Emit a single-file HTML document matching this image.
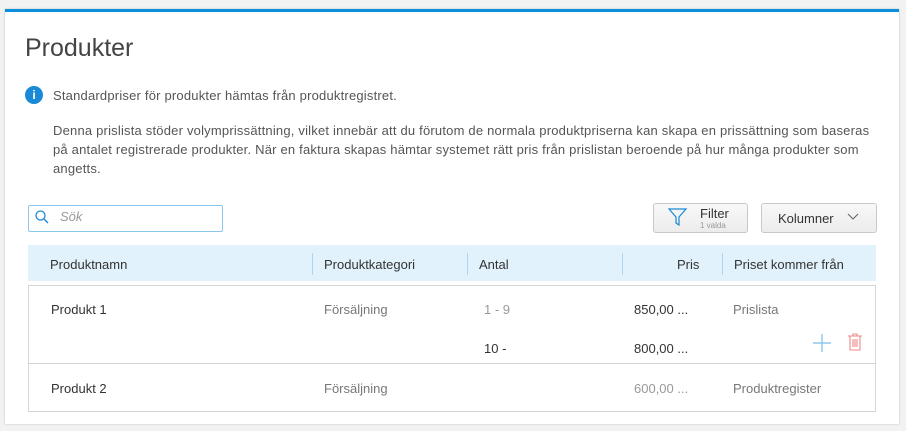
<!DOCTYPE html>
<html><head><style>
body{margin:0;width:906px;height:431px;background:#f2f2f2;font-family:"Liberation Sans",sans-serif;position:relative;overflow:hidden;color:#333}
.card{position:absolute;left:5px;top:9px;width:894px;height:412px;background:#fff;border-top:3px solid #0a8fdc;box-shadow:0 0 2px rgba(0,0,0,.2)}
.a{position:absolute;white-space:nowrap}
h1{position:absolute;left:25px;top:34px;margin:0;font-weight:normal;font-size:25px;color:#444}
.p{font-size:13px;color:#555;line-height:19px;letter-spacing:0.2px}
.btn{position:absolute;border:1px solid #c8c8c8;border-radius:3px;background:linear-gradient(#f8f8f8,#ececec);}
.hdr{position:absolute;left:28px;top:245px;width:848px;height:36px;background:#e1f2fc}
.sep{position:absolute;top:8px;width:1px;height:22px;background:#a9d8f2}
.t{font-size:13px;color:#333}
.g{color:#777}
.row{position:absolute;left:28px;width:846px;border:1px solid #d6d6d6;background:#fff}
</style></head><body>
<div class="card"></div>
<h1>Produkter</h1>
<div class="a" style="left:25px;top:86px;width:18px;height:18px;border-radius:50%;background:#1a8ad6;color:#fff;font-size:12px;font-weight:bold;text-align:center;line-height:18px">i</div>
<div class="a p" style="left:53px;top:86px">Standardpriser för produkter hämtas från produktregistret.</div>
<div class="a p" style="left:53px;top:121px">Denna prislista stöder volymprissättning, vilket innebär att du förutom de normala produktpriserna kan skapa en prissättning som baseras<br>på antalet registrerade produkter. När en faktura skapas hämtar systemet rätt pris från prislistan beroende på hur många produkter som<br>angetts.</div>
<div class="a" style="left:28px;top:205px;width:193px;height:25px;border:1px solid #8cc8ee;border-radius:2px"></div>
<svg class="a" style="left:34px;top:209px" width="16" height="16"><circle cx="6.5" cy="6.5" r="4.5" fill="none" stroke="#1a8ad6" stroke-width="1.3"/><line x1="10" y1="10" x2="14" y2="14" stroke="#1a8ad6" stroke-width="1.4"/></svg>
<div class="a" style="left:60px;top:209px;font-size:13px;font-style:italic;color:#999">Sök</div>
<div class="btn" style="left:653px;top:203px;width:93px;height:28px"></div>
<svg class="a" style="left:668px;top:208px" width="20" height="18"><path d="M1 1H18L11 9V17L8 15V9Z" fill="none" stroke="#1a8ad6" stroke-width="1.2"/></svg>
<div class="a" style="left:700px;top:206px;font-size:13px;color:#333">Filter</div>
<div class="a" style="left:700px;top:221px;font-size:8px;color:#999">1 valda</div>
<div class="btn" style="left:761px;top:203px;width:114px;height:28px"></div>
<div class="a" style="left:778px;top:211px;font-size:13px">Kolumner</div>
<svg class="a" style="left:847px;top:213px" width="12" height="8"><path d="M1 1L6 6L11 1" fill="none" stroke="#666" stroke-width="1.1"/></svg>
<div class="hdr">
<div class="sep" style="left:284px"></div><div class="sep" style="left:439px"></div><div class="sep" style="left:594px"></div><div class="sep" style="left:694px"></div>
<div class="a t" style="left:22px;top:12px">Produktnamn</div>
<div class="a t" style="left:296px;top:12px">Produktkategori</div>
<div class="a t" style="left:451px;top:12px">Antal</div>
<div class="a t" style="left:649px;top:12px">Pris</div>
<div class="a t" style="left:706px;top:12px">Priset kommer från</div>
</div>
<div class="row" style="top:285px;height:77px"></div>
<div class="row" style="top:363px;height:47px"></div>
<div class="a t" style="left:51px;top:302px">Produkt 1</div>
<div class="a t g" style="left:324px;top:302px">Försäljning</div>
<div class="a t" style="left:484px;top:302px;color:#999">1 - 9</div>
<div class="a t" style="left:634px;top:302px">850,00 ...</div>
<div class="a t g" style="left:733px;top:302px">Prislista</div>
<div class="a t" style="left:484px;top:341px">10 -</div>
<div class="a t" style="left:634px;top:341px">800,00 ...</div>
<svg class="a" style="left:812px;top:333px" width="20" height="20"><path d="M10 1V19M1 10H19" stroke="#8cc8ee" stroke-width="1.4"/></svg>
<svg class="a" style="left:847px;top:333px" width="16" height="18"><path d="M1 3H15M6 3V1H10V3M3 3V17H13V3M6 6V14M8 6V14M10 6V14" fill="none" stroke="#e88" stroke-width="1.1"/></svg>
<div class="a t" style="left:51px;top:381px">Produkt 2</div>
<div class="a t g" style="left:324px;top:381px">Försäljning</div>
<div class="a t" style="left:634px;top:381px;color:#999">600,00 ...</div>
<div class="a t g" style="left:733px;top:381px">Produktregister</div>
</body></html>
